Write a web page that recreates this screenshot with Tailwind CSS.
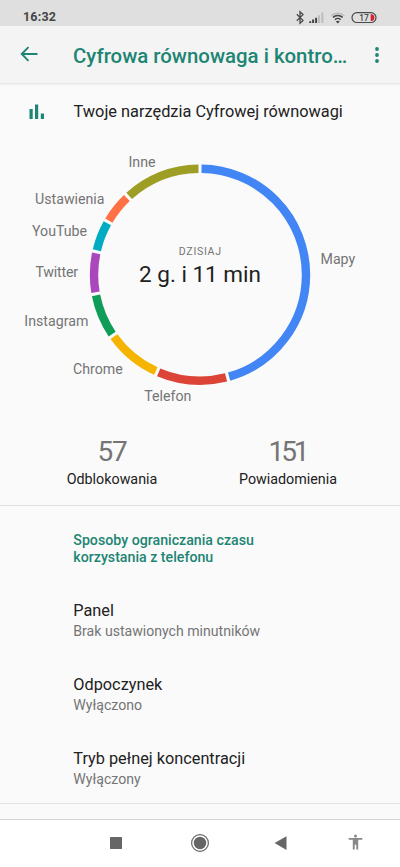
<!DOCTYPE html>
<html lang="pl">
<head>
<meta charset="utf-8">
<meta name="viewport" content="width=device-width, initial-scale=1">
<title>Cyfrowa równowaga</title>
<script src="https://cdn.jsdelivr.net/npm/@tailwindcss/browser@4"></script>
</head>
<body class="w-[400px] h-[867px] overflow-hidden bg-[#fafafa] font-['Roboto',sans-serif] text-[#212121] flex flex-col">
  <div class="h-[26px] shrink-0 bg-[#dfdfdf] flex items-center justify-between pl-[23px] pr-[22px] pt-[7px]">
    <span class="text-[12.5px] leading-[18px] font-bold text-[#454545] tracking-[0.2px]">16:32</span>
    <svg class="w-[84px] h-[18px]" viewBox="294 7 84 18" fill="none">
      <path d="M296.8 13.3 303 19.4 300 22.2V10.8L303 13.6 296.8 19.7" stroke="#484848" stroke-width="1.3"/>
      <path d="M309.2 22v-1.8h2V22zM312.1 22v-3.6h2V22zM315.1 22v-5.3h2V22z" fill="#444"/>
      <path d="M318.1 22v-7.8h2V22zM321.4 22V11.5h2V22z" fill="#bdbdbd"/>
      <path d="M331.4 14.8a9.2 9.2 0 0 1 12.8 0" stroke="#b9b9b9" stroke-width="1.6"/>
      <path d="M333 16.4a6.9 6.9 0 0 1 9.6 0M335 18.7a4 4 0 0 1 5.6 0" stroke="#444" stroke-width="1.5"/>
      <path d="M335.9 20.6a2.8 2.8 0 0 1 3.8 0l-1.9 1.8z" fill="#444"/>
      <rect x="352" y="11.7" width="24" height="9.8" rx="4.9" stroke="#4a4a4a" stroke-width="1.2"/>
      <path d="M370.6 13.2h1c1.8 0 2.8 1.5 2.8 3.4s-1 3.4-2.8 3.4h-1z" fill="#d8232f"/>
      <text x="359.2" y="19.7" font-size="8.5" font-weight="500" fill="#444">17</text>
    </svg>
  </div>
  <header class="h-[57px] shrink-0 bg-[#f4f4f4] flex items-center pl-5 pr-[19px] shadow-[0_1px_2px_#e0e0e0] relative">
    <svg class="w-[18px] h-[16px] -mt-[1px]" viewBox="0 0 18 16" fill="none" stroke="#1d8573" stroke-width="1.9"><path d="M17.5 8H2M8.5 1.1 1.7 8l6.8 6.9"/></svg>
    <h1 class="ml-[35px] mt-[3px] text-[20.4px] leading-6 font-medium text-[#1d8573] whitespace-nowrap w-[290px]">Cyfrowa równowaga i kontro…</h1>
    <svg class="w-1 h-4 ml-[12px] shrink-0" viewBox="0 0 4 16" fill="#1d8573"><circle cx="2" cy="2" r="1.9"/><circle cx="2" cy="8" r="1.9"/><circle cx="2" cy="14" r="1.9"/></svg>
  </header>
  <section class="h-[57px] shrink-0 flex items-center pl-[29px]">
    <svg class="w-4 h-[15px]" viewBox="0 0 16 15" fill="#1d8573"><path d="M.5 5h3.2v10H.5zM6 .5h3.2V15H6zM11.8 9.5H15V15h-3.2z"/></svg>
    <span class="ml-[28.5px] text-[16.35px] leading-5 whitespace-nowrap">Twoje narzędzia Cyfrowej równowagi</span>
  </section>
  <svg class="w-[400px] h-[280px] shrink-0" viewBox="0 140 400 280">
    <g transform="translate(200 274.7) rotate(-90)" fill="none" stroke-width="8.4">
      <circle r="106" pathLength="360" stroke="#4285f4" stroke-dasharray="163.2 360" stroke-dashoffset="-0.85"/>
      <circle r="106" pathLength="360" stroke="#db4437" stroke-dasharray="37.2 360" stroke-dashoffset="-165.75"/>
      <circle r="106" pathLength="360" stroke="#f4b400" stroke-dasharray="29.6 360" stroke-dashoffset="-204.65"/>
      <circle r="106" pathLength="360" stroke="#0f9d58" stroke-dasharray="22.8 360" stroke-dashoffset="-235.95"/>
      <circle r="106" pathLength="360" stroke="#ab47bc" stroke-dasharray="21.2 360" stroke-dashoffset="-260.45"/>
      <circle r="106" pathLength="360" stroke="#00acc1" stroke-dasharray="15.7 360" stroke-dashoffset="-283.35"/>
      <circle r="106" pathLength="360" stroke="#ff7043" stroke-dasharray="15.6 360" stroke-dashoffset="-300.75"/>
      <circle r="106" pathLength="360" stroke="#9e9d24" stroke-dasharray="41.1 360" stroke-dashoffset="-318.05"/>
    </g>
    <g font-size="14.2" fill="#757575">
      <text x="128.5" y="167">Inne</text>
      <text x="35" y="204">Ustawienia</text>
      <text x="32" y="235.7">YouTube</text>
      <text x="35.5" y="277.3" textLength="42.5">Twitter</text>
      <text x="24.3" y="326.3">Instagram</text>
      <text x="73" y="374">Chrome</text>
      <text x="144.3" y="401">Telefon</text>
      <text x="320.5" y="264">Mapy</text>
    </g>
    <text x="200.3" y="255" text-anchor="middle" font-size="10.6" letter-spacing="0.7" fill="#757575">DZISIAJ</text>
    <text x="200" y="282" text-anchor="middle" font-size="22.5" fill="#212121">2 g. i 11 min</text>
  </svg>
  <section class="h-[86px] shrink-0 border-b border-[#e2e2e2] grid grid-cols-2 px-6 pt-[16px] text-center">
    <div><div class="text-[28px] leading-[32px] text-[#757575] tracking-[-1.2px]">57</div><div class="text-[14.3px] leading-5 mt-[1px]">Odblokowania</div></div>
    <div><div class="text-[28px] leading-[32px] text-[#757575] tracking-[-3px] -ml-[1px]">151</div><div class="text-[14.3px] leading-5 mt-[1px]">Powiadomienia</div></div>
  </section>
  <main class="h-[298px] shrink-0 border-b border-[#e2e2e2] pl-[73.3px] pt-[26px] whitespace-nowrap">
    <h2 class="text-[14.2px] leading-[17px] font-medium text-[#1d8573]">Sposoby ograniczania czasu<br>korzystania z telefonu</h2>
    <div class="mt-[35px] h-[74px]"><div class="text-[16.3px] leading-5">Panel</div><div class="text-[14.1px] leading-5 text-[#757575]">Brak ustawionych minutników</div></div>
    <div class="h-[74px]"><div class="text-[16.3px] leading-5">Odpoczynek</div><div class="text-[14.1px] leading-5 text-[#757575]">Wyłączono</div></div>
    <div><div class="text-[16.3px] leading-5">Tryb pełnej koncentracji</div><div class="text-[14.1px] leading-5 text-[#757575]">Wyłączony</div></div>
  </main>
  <div class="h-[15px] shrink-0"></div>
  <nav class="h-[48px] shrink-0 border-t border-[#d2d2d2] bg-white">
    <svg class="w-[400px] h-[47px]" viewBox="0 820 400 47" fill="#666">
      <rect x="110" y="837" width="12" height="12" rx=".4"/>
      <circle cx="200" cy="843" r="8.4" fill="none" stroke="#666" stroke-width="1.2"/><circle cx="200" cy="843" r="6.2"/>
      <path d="M286.5 836.3v13.6L274.6 843.1z"/>
      <g fill="#888"><circle cx="355.5" cy="835.9" r="1.5"/><path d="M348.7 838h13.6v1.7h-4.1v9.7h-1.9v-4.6h-1.6v4.6h-1.9v-9.7h-4.1z"/></g>
    </svg>
  </nav>
</body>
</html>
